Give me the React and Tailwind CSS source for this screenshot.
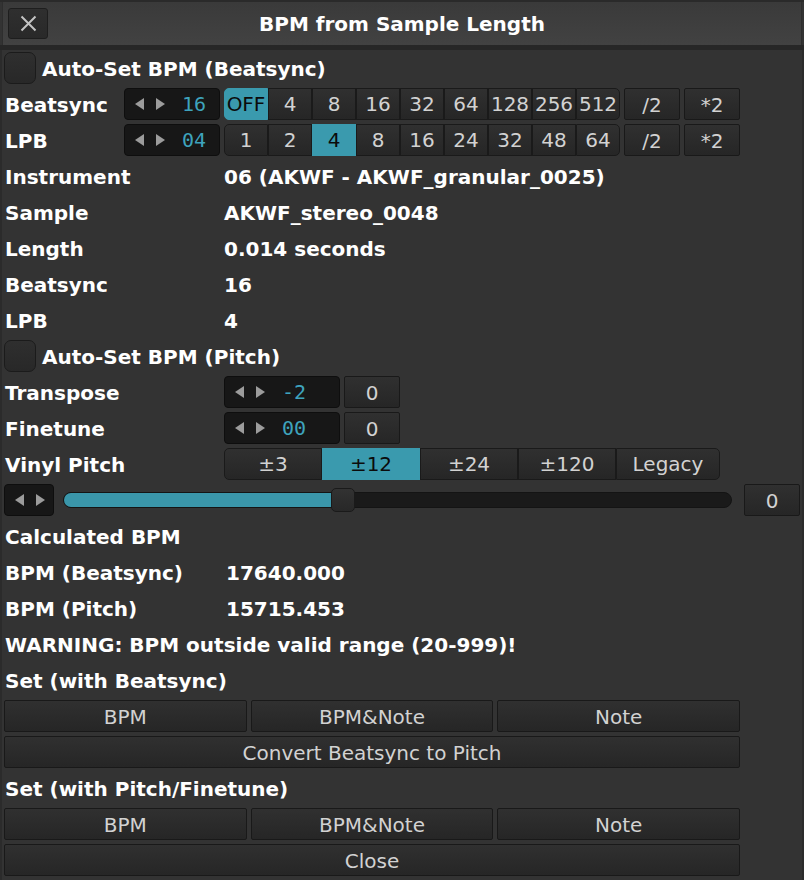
import React from "react";

const SANS = "font-['DejaVu_Sans',sans-serif]";
const MONO = "font-['DejaVu_Sans_Mono',monospace]";

function Arrows() {
  return (
    <div className="w-[50px] h-full flex items-center justify-center gap-[12px] shrink-0">
      <svg width="9" height="12" viewBox="0 0 9 12">
        <polygon points="9,0 9,12 0,6" fill="#9c9c9c" />
      </svg>
      <svg width="9" height="12" viewBox="0 0 9 12">
        <polygon points="0,0 0,12 9,6" fill="#9c9c9c" />
      </svg>
    </div>
  );
}

function ValueBox({ value, className }) {
  return (
    <div className={`h-[32px] flex items-center rounded-[4px] border border-[#0e0e0e] bg-[#171717] shrink-0 ${className}`}>
      <Arrows />
      {value !== undefined && (
        <span className={`ml-[7px] text-[20px] leading-none text-[#3ea3bd] ${MONO}`}>{value}</span>
      )}
    </div>
  );
}

function Btn({ children, className }) {
  return (
    <div
      className={`h-[32px] flex items-center justify-center rounded-[2px] border border-[#191919] bg-linear-to-b from-[#303030] to-[#262626] text-[20px] leading-none text-[#d2d2d2] shrink-0 ${className}`}
    >
      <span className="translate-y-[1px]">{children}</span>
    </div>
  );
}

function Segs({ items, active, widths }) {
  const last = items.length - 1;
  return (
    <div className="flex shrink-0">
      {items.map((it, i) => {
        const on = i === active;
        return (
          <div
            key={i}
            className={`${widths[i]} h-[32px] flex items-center justify-center text-[20px] leading-none border ${
              on
                ? "bg-[#3a9aae] border-[#3a9aae] text-[#0b0b0b]"
                : "bg-linear-to-b from-[#303030] to-[#262626] border-[#1a1a1a] text-[#d2d2d2]"
            } ${i === 0 ? "rounded-l-[5px]" : ""} ${i === last ? "rounded-r-[5px]" : ""}`}
          >
            {it}
          </div>
        );
      })}
    </div>
  );
}

function Check({ label }) {
  return (
    <div className="h-[32px] flex items-center">
      <div className="w-[32px] h-[32px] rounded-[7px] border border-[#1b1b1b] bg-linear-to-b from-[#2f2f2f] to-[#282828]" />
      <span className="ml-[6px] font-bold text-[20px] text-white translate-y-[1px]">{label}</span>
    </div>
  );
}

function Info({ label, value, w = "w-[220px]" }) {
  return (
    <div className="h-[32px] flex items-center font-bold text-[20px] text-white">
      <span className={`${w} pl-[1px] shrink-0 translate-y-[1px]`}>{label}</span>
      <span className="translate-y-[1px]">{value}</span>
    </div>
  );
}

function Label({ children, w }) {
  return <span className={`${w} pl-[1px] shrink-0 font-bold text-[20px] text-white translate-y-[1px]`}>{children}</span>;
}

const W44 = Array(9).fill("w-[44px]");

export default function App() {
  return (
    <div className={`w-[804px] h-[880px] bg-[#333333] flex flex-col overflow-hidden ${SANS}`}>
      <div className="h-[2px] bg-[#2a2a2a] shrink-0" />
      <div className="mx-[2px] h-[43px] shrink-0 grid grid-cols-[48px_1fr_48px] items-center bg-linear-to-b from-[#3a3a3a] to-[#424242] border-x border-[#2e2e2e]">
        <div className="ml-[5px] w-[40px] h-[31px] flex items-center justify-center rounded-[3px] border border-[#1e1e1e] bg-linear-to-b from-[#2f2f2f] to-[#292929]">
          <svg width="17" height="17" viewBox="0 0 17 17">
            <path d="M1.5 1.5 L15.5 15.5 M15.5 1.5 L1.5 15.5" stroke="#c4c4c4" strokeWidth="2" />
          </svg>
        </div>
        <div className="text-center font-bold text-[20px] text-white">BPM from Sample Length</div>
        <div />
      </div>
      <div className="h-[5px] bg-[#272727] shrink-0" />
      <div className="flex-1 flex flex-col gap-[4px] pt-[2px] pl-[2px] border-l-2 border-r-2 border-[#2b2b2b]">
        <Check label="Auto-Set BPM (Beatsync)" />

        <div className="h-[32px] flex items-center">
          <Label w="w-[120px]">Beatsync</Label>
          <ValueBox value="16" className="w-[96px]" />
          <div className="ml-[4px]">
            <Segs items={["OFF", "4", "8", "16", "32", "64", "128", "256", "512"]} active={0} widths={W44} />
          </div>
          <Btn className="ml-[4px] w-[56px]">/2</Btn>
          <Btn className="ml-[4px] w-[56px]">*2</Btn>
        </div>

        <div className="h-[32px] flex items-center">
          <Label w="w-[120px]">LPB</Label>
          <ValueBox value="04" className="w-[96px]" />
          <div className="ml-[4px]">
            <Segs items={["1", "2", "4", "8", "16", "24", "32", "48", "64"]} active={2} widths={W44} />
          </div>
          <Btn className="ml-[4px] w-[56px]">/2</Btn>
          <Btn className="ml-[4px] w-[56px]">*2</Btn>
        </div>

        <Info label="Instrument" value="06 (AKWF - AKWF_granular_0025)" />
        <Info label="Sample" value="AKWF_stereo_0048" />
        <Info label="Length" value="0.014 seconds" />
        <Info label="Beatsync" value="16" />
        <Info label="LPB" value="4" />

        <Check label="Auto-Set BPM (Pitch)" />

        <div className="h-[32px] flex items-center">
          <Label w="w-[220px]">Transpose</Label>
          <ValueBox value="-2" className="w-[116px]" />
          <Btn className="ml-[4px] w-[56px]">0</Btn>
        </div>
        <div className="h-[32px] flex items-center">
          <Label w="w-[220px]">Finetune</Label>
          <ValueBox value="00" className="w-[116px]" />
          <Btn className="ml-[4px] w-[56px]">0</Btn>
        </div>
        <div className="h-[32px] flex items-center">
          <Label w="w-[220px]">Vinyl Pitch</Label>
          <Segs
            items={["±3", "±12", "±24", "±120", "Legacy"]}
            active={1}
            widths={["w-[98px]", "w-[98px]", "w-[98px]", "w-[98px]", "w-[104px]"]}
          />
        </div>

        <div className="h-[32px] flex items-center">
          <ValueBox className="w-[50px]" />
          <div className="ml-[9px] w-[669px] h-[16px] rounded-full bg-[#1a1a1a] border border-[#141414] relative shrink-0">
            <div className="absolute left-0 top-0 bottom-0 w-[276px] rounded-full bg-[#3a96aa]" />
            <div className="absolute left-[267px] top-[-5px] w-[24px] h-[24px] rounded-[5px] border border-[#1a1a1a] bg-linear-to-b from-[#323232] to-[#282828]" />
          </div>
          <Btn className="ml-[12px] w-[56px]">0</Btn>
        </div>

        <Info label="Calculated BPM" value="" />
        <Info label="BPM (Beatsync)" value="17640.000" w="w-[222px]" />
        <Info label="BPM (Pitch)" value="15715.453" w="w-[222px]" />
        <Info label="WARNING: BPM outside valid range (20-999)!" value="" w="w-auto" />
        <Info label="Set (with Beatsync)" value="" w="w-auto" />
        <div className="w-[736px] flex gap-[4px]">
          <Btn className="flex-1">BPM</Btn>
          <Btn className="flex-1">BPM&amp;Note</Btn>
          <Btn className="flex-1">Note</Btn>
        </div>
        <Btn className="w-[736px]">Convert Beatsync to Pitch</Btn>
        <Info label="Set (with Pitch/Finetune)" value="" w="w-auto" />
        <div className="w-[736px] flex gap-[4px]">
          <Btn className="flex-1">BPM</Btn>
          <Btn className="flex-1">BPM&amp;Note</Btn>
          <Btn className="flex-1">Note</Btn>
        </div>
        <Btn className="w-[736px]">Close</Btn>
      </div>
    </div>
  );
}
